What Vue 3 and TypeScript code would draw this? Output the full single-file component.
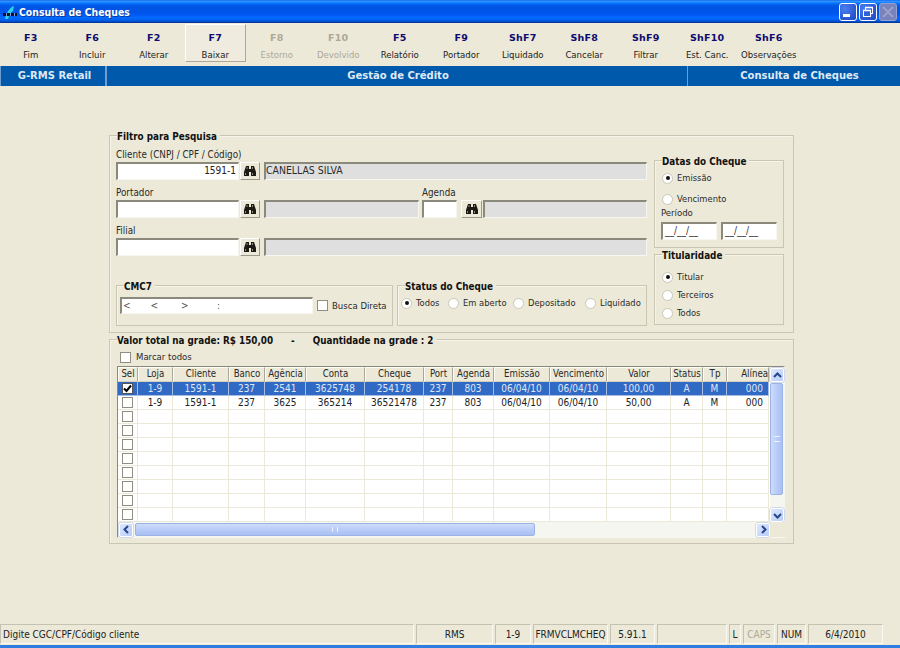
<script setup lang="ts">
interface Key { key: string; label: string; off?: boolean; hot?: boolean }
interface Col { name: string; w: number; align?: string }

const keys: Key[] = [
  { key: 'F3', label: 'Fim' }, { key: 'F6', label: 'Incluir' }, { key: 'F2', label: 'Alterar' },
  { key: 'F7', label: 'Baixar', hot: true }, { key: 'F8', label: 'Estorno', off: true },
  { key: 'F10', label: 'Devolvido', off: true }, { key: 'F5', label: 'Relatório' },
  { key: 'F9', label: 'Portador' }, { key: 'ShF7', label: 'Liquidado' }, { key: 'ShF8', label: 'Cancelar' },
  { key: 'ShF9', label: 'Filtrar' }, { key: 'ShF10', label: 'Est. Canc.' }, { key: 'ShF6', label: 'Observações' },
]
const cols: Col[] = [
  { name: 'Sel', w: 20 }, { name: 'Loja', w: 35 }, { name: 'Cliente', w: 56 }, { name: 'Banco', w: 36 },
  { name: 'Agência', w: 41 }, { name: 'Conta', w: 59 }, { name: 'Cheque', w: 59 }, { name: 'Port', w: 29 },
  { name: 'Agenda', w: 41 }, { name: 'Emissão', w: 56 }, { name: 'Vencimento', w: 57 }, { name: 'Valor', w: 64 },
  { name: 'Status', w: 32 }, { name: 'Tp', w: 24 }, { name: 'Alínea', w: 42, align: 'right' },
]
const gridCols = cols.map(c => c.w + 'px').join(' ')
const data: string[][] = [
  ['1-9', '1591-1', '237', '2541', '3625748', '254178', '237', '803', '06/04/10', '06/04/10', '100,00', 'A', 'M', '000'],
  ['1-9', '1591-1', '237', '3625', '365214', '36521478', '237', '803', '06/04/10', '06/04/10', '50,00', 'A', 'M', '000'],
]
const rows: string[][] = Array.from({ length: 10 }, (_, i) => data[i] ?? Array(14).fill(''))
const status = [
  { t: 'Digite CGC/CPF/Código cliente', w: 414, left: true }, { t: 'RMS', w: 77 }, { t: '1-9', w: 36 },
  { t: 'FRMVCLMCHEQ', w: 75 }, { t: '5.91.1', w: 45 }, { t: '', w: 70 }, { t: 'L', w: 12 },
  { t: 'CAPS', w: 32, off: true }, { t: 'NUM', w: 29 }, { t: '6/4/2010', w: 75 },
]
const mask = '<' + ' '.repeat(7) + '<' + ' '.repeat(8) + '>' + ' '.repeat(10) + ':'
const binoBody = 'M3 1h3v3h2V1h3l2 6v4H8V7H6v4H1V7z'
const binoLight = 'M2.500 8v2M9.500 8v2M4 2v2M9.500 2v2'
</script>

<template>
  <div class="win">
    <header class="title">
      <svg class="logo" width="16" height="16" viewBox="0 0 16 16">
        <path d="M3 15 C4 9 8 3 12 2 L11 7 C9 8 7 11 6 15 Z" fill="#27d3e6" />
        <rect x="1" y="9" width="14" height="3" fill="#071530" />
        <rect x="4" y="9" width="1" height="3" fill="#7f9ad8" />
        <rect x="8" y="9" width="1" height="3" fill="#7f9ad8" />
        <rect x="12" y="9" width="1" height="3" fill="#7f9ad8" />
      </svg>
      <span class="title-text">Consulta de Cheques</span>
      <div class="wbtns">
        <span class="wbtn"><i class="min"></i></span>
        <span class="wbtn">
          <svg width="12" height="12" viewBox="0 0 12 12" fill="none" stroke="#fff">
            <rect x="3.500" y="1.500" width="7" height="6" stroke-width="1" />
            <rect x="1.500" y="4.500" width="7" height="6" fill="#2f62d8" stroke-width="1" />
            <path d="M1 4.500h8M3 1.500h8" stroke-width="1.400" />
          </svg>
        </span>
        <span class="wbtn dis">
          <svg width="12" height="12" viewBox="0 0 12 12" stroke="#9aa2c8" stroke-width="2"><path d="M1 1l10 10M11 1L1 11" /></svg>
        </span>
      </div>
    </header>

    <nav class="toolbar">
      <button v-for="k in keys" :key="k.key" class="tool" :class="{ off: k.off, hot: k.hot }">
        <b>{{ k.key }}</b><span>{{ k.label }}</span>
      </button>
    </nav>

    <div class="band">
      <div class="b1">G-RMS Retail</div>
      <div class="b2">Gestão de Crédito</div>
      <div class="b3">Consulta de Cheques</div>
    </div>

    <main class="main">
      <section class="group filtro">
        <h3 class="legend">Filtro para Pesquisa</h3>
        <div class="left">
          <div class="field">
            <label>Cliente (CNPJ / CPF / Código)</label>
            <div class="row">
              <div class="in w123 num">1591-1</div>
              <button class="bino"><svg width="14" height="12" viewBox="0 0 14 12"><path :d="binoBody" fill="#1c1a14" /><path :d="binoLight" stroke="#8d8a78" /></svg></button>
              <div class="in ro grow">CANELLAS SILVA</div>
            </div>
          </div>
          <div class="field">
            <div class="labels"><label class="lb306">Portador</label><label>Agenda</label></div>
            <div class="row">
              <div class="in w123"></div>
              <button class="bino"><svg width="14" height="12" viewBox="0 0 14 12"><path :d="binoBody" fill="#1c1a14" /><path :d="binoLight" stroke="#8d8a78" /></svg></button>
              <div class="in ro w155"></div>
              <div class="in w35"></div>
              <button class="bino b2nd"><svg width="14" height="12" viewBox="0 0 14 12"><path :d="binoBody" fill="#1c1a14" /><path :d="binoLight" stroke="#8d8a78" /></svg></button>
              <div class="in ro grow tight"></div>
            </div>
          </div>
          <div class="field">
            <label>Filial</label>
            <div class="row">
              <div class="in w123"></div>
              <button class="bino"><svg width="14" height="12" viewBox="0 0 14 12"><path :d="binoBody" fill="#1c1a14" /><path :d="binoLight" stroke="#8d8a78" /></svg></button>
              <div class="in ro grow"></div>
            </div>
          </div>
          <div class="bottom">
            <section class="group cmc">
              <h3 class="legend">CMC7</h3>
              <div class="in w193 mask">{{ mask }}</div>
              <span class="cb"></span><span class="cbl">Busca Direta</span>
            </section>
            <section class="group stat">
              <h3 class="legend">Status do Cheque</h3>
              <div class="opt o47"><span class="radio on"></span>Todos</div>
              <div class="opt o65"><span class="radio"></span>Em aberto</div>
              <div class="opt o72"><span class="radio"></span>Depositado</div>
              <div class="opt"><span class="radio"></span>Liquidado</div>
            </section>
          </div>
        </div>
        <div class="right">
          <section class="group datas">
            <h3 class="legend">Datas do Cheque</h3>
            <div class="opt"><span class="radio on"></span>Emissão</div>
            <div class="opt venc"><span class="radio"></span>Vencimento</div>
            <label class="per">Período</label>
            <div class="dates"><div class="in date">__/__/__</div><div class="in date">__/__/__</div></div>
          </section>
          <section class="group tit">
            <h3 class="legend">Titularidade</h3>
            <div class="opt"><span class="radio on"></span>Titular</div>
            <div class="opt"><span class="radio"></span>Terceiros</div>
            <div class="opt"><span class="radio"></span>Todos</div>
          </section>
        </div>
      </section>

      <section class="group lista">
        <h3 class="legend wide">Valor total na grade: R$ 150,00<i>-</i>Quantidade na grade : 2</h3>
        <div class="marcar"><span class="cb"></span>Marcar todos</div>
        <div class="gridbox">
          <div class="table">
            <div class="tr head" :style="{ gridTemplateColumns: gridCols }">
              <div v-for="c in cols" :key="c.name" class="th" :class="{ r: c.align }">{{ c.name }}</div>
            </div>
            <div v-for="(r, i) in rows" :key="i" class="tr" :class="{ sel: i === 0 }" :style="{ gridTemplateColumns: gridCols }">
              <div class="td"><span class="cb small" :class="{ chk: i === 0 }">
                <svg v-if="i === 0" width="9" height="9" viewBox="0 0 9 9"><path d="M1 4.500l2.500 2.500L8 1.500" fill="none" stroke="#000" stroke-width="2" /></svg>
              </span></div>
              <div v-for="(v, j) in r" :key="j" class="td" :class="{ r: j === 13 }">{{ v }}</div>
            </div>
          </div>
          <div class="vbar">
            <span class="sb up"><svg width="9" height="7" viewBox="0 0 9 7"><path d="M1 5l3.500-3.500L8 5" fill="none" stroke="#27468c" stroke-width="2" /></svg></span>
            <span class="vthumb"><i></i></span>
            <span class="vtrack"></span>
            <span class="sb"><svg width="9" height="7" viewBox="0 0 9 7"><path d="M1 2l3.500 3.500L8 2" fill="none" stroke="#27468c" stroke-width="2" /></svg></span>
          </div>
          <div class="hbar">
            <span class="sb"><svg width="7" height="9" viewBox="0 0 7 9"><path d="M5 1L1.500 4.500 5 8" fill="none" stroke="#27468c" stroke-width="2" /></svg></span>
            <span class="hthumb"><i></i></span>
            <span class="htrack"></span>
            <span class="sb"><svg width="7" height="9" viewBox="0 0 7 9"><path d="M2 1l3.500 3.500L2 8" fill="none" stroke="#27468c" stroke-width="2" /></svg></span>
          </div>
          <div class="corner"></div>
        </div>
      </section>
    </main>

    <footer class="status">
      <div v-for="s in status" :key="s.w + s.t" class="sc" :class="{ left: s.left, off: s.off }" :style="{ width: s.w + 'px' }">{{ s.t }}</div>
    </footer>
    <div class="taskline"></div>
  </div>
</template>

<style>
html, body { margin: 0; padding: 0; background: #ece9d8; }
</style>

<style scoped>
* { box-sizing: border-box; }
.win {
  width: 900px; height: 648px; display: flex; flex-direction: column; background: #ece9d8;
  font: 10px/12px "DejaVu Sans Condensed", "Liberation Sans", sans-serif; color: #2a2a2a; overflow: hidden;
}
.title {
  height: 23px; flex: none; display: flex; align-items: center; padding: 1px 3px 0 2px;
  background: linear-gradient(#0058e6 0, #3a93ff 4%, #288eff 8%, #127dff 12%, #036ffc 16%, #0262ee 20%, #0057e5 26%, #0054e3 32%, #0055eb 56%, #005bf5 66%, #026afe 76%, #0062ef 86%, #0052d6 92%, #0040ab 96%, #003092 100%);
}
.logo { flex: none; }
.title-text { margin-left: 1px; color: #fff; font: bold 10.4px/14px "DejaVu Sans Condensed", sans-serif; text-shadow: 1px 1px 0 #0f3a9c; }
.wbtns { margin-left: auto; display: flex; gap: 2px; margin-top: -1px; }
.wbtn {
  width: 18px; height: 18px; border: 1px solid #fff; border-radius: 3px; display: flex; align-items: center; justify-content: center;
  background: radial-gradient(circle at 30% 30%, #4a7ff0, #2a55d0 70%, #1e44b8);
}
.wbtn .min { width: 7px; height: 3px; background: #fff; margin: 7px 4px 0 0; display: block; }
.wbtn.dis { background: #7883bd; border-color: #98a2cf; }

.toolbar { height: 42px; flex: none; display: grid; grid-template-columns: repeat(13, 61.5px); padding-top: 1px; margin-bottom: 1px; }
.tool {
  height: 38px; padding: 7px 0 0; margin: 0; border: 1px solid transparent; background: none; font: inherit; color: #222;
  display: flex; flex-direction: column; align-items: center; gap: 5px;
}
.tool b { font: bold 9.5px/12px "DejaVu Sans", sans-serif; color: #0c0c70; letter-spacing: .2px; }
.tool span { line-height: 12px; font-size: 9.5px; }
.tool.off b, .tool.off span { color: #aca899; }
.tool.hot { border-color: #fff #aca899 #aca899 #fff; background: #efecdf; }

.band { height: 20px; flex: none; display: flex; background: #0059ab; color: #dfe9f5; font: bold 10px/20px "DejaVu Sans", sans-serif; text-align: center; }
.b1 { width: 107px; border: 1px solid #6f9dcd; border-width: 0 2px 0 1px; padding-left: 3px; }
.b2 { width: 580px; padding-left: 2px; }
.b3 { flex: 1; border-left: 1px solid #6f9dcd; padding-left: 11px; }

.main { flex: 1; padding: 49px 0 0 109px; }
.group { position: relative; border: 1px solid #c9c7b4; box-shadow: inset 1px 1px 0 #f7f5ea; }
.legend {
  position: absolute; top: -6px; left: 7px; margin: 0; padding: 0 3px 0 0; background: #ece9d8; color: #111;
  font: bold 9.8px/13px "DejaVu Sans Condensed", sans-serif; white-space: nowrap;
}
.legend i { font-style: normal; margin: 0 18px; }
.filtro { width: 685px; height: 198px; padding: 13px 0 0 6px; display: flex; }
.left { width: 531px; flex: none; }
.right { width: 130px; margin-left: 7px; padding-top: 11px; }
.field { height: 38px; }
.field label { display: block; height: 13px; font-size: 9.8px; }
.labels { display: flex; }
.labels .lb306 { width: 306px; }
.row { display: flex; height: 18px; align-items: flex-start; }
.in {
  height: 18px; background: #fff; border-style: solid; border-width: 2px 1px 1px 2px; border-color: #8b897b #f7f6ef #f7f6ef #8b897b;
  padding: 0 2px; line-height: 14px; white-space: pre; color: #222; flex: none;
}
.num { text-align: right; }
.ro { background: #dfdfdf; color: #2a2a2a; margin-left: 4px; padding-left: 0; line-height: 12px; font-size: 10.4px; }
.grow { flex: 1; }
.tight { margin-left: 1px; }
.w123 { width: 123px; }
.w155 { width: 155px; }
.w35 { width: 35px; margin-left: 3px; }
.w193 { width: 193px; }
.bino {
  width: 20px; height: 18px; margin: 0 0 0 1px; padding: 0; background: #ece9d8; flex: none; display: flex; align-items: center; justify-content: center;
  border: 1px solid; border-color: #fff #9b998a #9b998a #fff;
}
.b2nd { margin-left: 4px; width: 21px; }
.bottom { display: flex; gap: 4px; margin-top: 22px; height: 41px; }
.cmc { width: 277px; padding: 11px 0 0 3px; display: flex; align-items: flex-start; }
.mask { height: 17px; color: #555; padding-left: 1px; }
.cb { display: block; flex: none; width: 11px; height: 11px; background: #fff; border: 1px solid #8f8e80; }
.cmc .cb { margin: 3px 0 0 4px; }
.cbl { margin: 3px 0 0 4px; font-size: 9.5px; }
.stat { width: 250px; padding: 10px 0 0 3px; display: flex; }
.opt { display: flex; align-items: center; height: 14px; gap: 4px; flex: none; font-size: 9.3px; }
.o47 { width: 47px; }
.o65 { width: 65px; }
.o72 { width: 72px; }
.radio { width: 11px; height: 11px; flex: none; border-radius: 50%; background: #fff; border: 1px solid #c9c7b8; display: flex; align-items: center; justify-content: center; }
.radio.on::after { content: ""; width: 4px; height: 4px; border-radius: 50%; background: #111; }
.datas { height: 88px; padding: 10px 0 0 7px; }
.venc { margin-top: 7px; }
.per { display: block; height: 12px; margin: 1px 0 3px -1px; font-size: 9.5px; }
.dates { display: flex; gap: 4px; margin-left: -1px; }
.date { width: 56px; color: #333; }
.tit { height: 71px; margin-top: 6px; padding: 15px 0 0 7px; display: flex; flex-direction: column; gap: 4px; }

.lista { width: 685px; height: 205px; margin-top: 6px; padding: 0 0 0 7px; }
.marcar { display: flex; align-items: center; gap: 5px; height: 14px; margin: 10px 0 0 3px; font-size: 9.5px; }
.marcar .cb { width: 11px; height: 11px; }
.gridbox {
  width: 668px; height: 172px; margin-top: 2px; display: grid; grid-template-columns: 652px 15px; grid-template-rows: 155px 15px;
  border: 1px solid; border-color: #8b897b #f7f6ef #f7f6ef #8b897b; background: #fff;
}
.table { overflow: hidden; background: #fff; }
.tr { display: grid; height: 14px; }
.head { height: 15px; background: #ece9d8; }
.th { border: 1px solid; border-color: #fdfcf5 #a8a698 #d2cfbe #fdfcf5; text-align: center; line-height: 12px; overflow: hidden; white-space: nowrap; color: #2a2a2a; font-size: 9.6px; }
.th.r { text-align: right; padding-right: 0; }
.td { border-right: 1px solid #ece9d8; border-bottom: 1px solid #ece9d8; text-align: center; line-height: 13px; overflow: hidden; white-space: nowrap; display: flex; align-items: center; justify-content: center; color: #222; }
.td.r { justify-content: flex-end; padding-right: 5px; }
.sel .td { background: #316ac5; color: #dfe7f5; border-right-color: #a7bde2; border-bottom-color: #a7bde2; }
.small { width: 11px; height: 11px; display: flex; align-items: center; justify-content: center; }
.small.chk { border-color: #555; }
.sb {
  width: 14px; height: 14px; flex: none; display: flex; align-items: center; justify-content: center; border-radius: 2px;
  background: linear-gradient(135deg, #dce8fd, #bacdf7); border: 1px solid #fff; box-shadow: 0 0 0 .5px #a9bde8;
}
.vbar { background: #f6f6f1; display: flex; flex-direction: column; align-items: flex-start; padding-top: 1px; }
.vthumb { width: 13px; height: 112px; margin: 1px 0 0 0; border-radius: 2px; background: linear-gradient(90deg, #cfdcfb, #b9cdf9 50%, #a9c0f2); border: 1px solid #9cb3e6; display: flex; align-items: center; justify-content: center; }
.vthumb i { width: 6px; height: 6px; border-top: 1px solid #edf2fe; border-bottom: 1px solid #edf2fe; display: block; }
.vtrack { flex: 1; }
.hbar { background: #f6f6f1; display: flex; align-items: center; padding-left: 1px; grid-column: 1; }
.hthumb { width: 400px; height: 13px; margin-left: 2px; border-radius: 2px; background: linear-gradient(#cfdcfb, #b9cdf9 50%, #a9c0f2); border: 1px solid #9cb3e6; display: flex; align-items: center; justify-content: center; }
.hthumb i { width: 6px; height: 5px; border-left: 1px solid #edf2fe; border-right: 1px solid #edf2fe; display: block; }
.htrack { flex: 1; }
.corner { background: #ece9d8; }

.status { height: 21px; flex: none; display: flex; gap: 2px; padding-bottom: 1px; }
.sc { height: 20px; border: 1px solid; border-color: #c4c2b0 #fbfaf2 #fbfaf2 #c4c2b0; text-align: center; line-height: 19px; white-space: nowrap; flex: none; color: #222; }
.sc.left { text-align: left; padding-left: 2px; }
.sc.off { color: #aca899; }
.taskline { height: 3px; flex: none; background: #2f7de0; }
</style>
